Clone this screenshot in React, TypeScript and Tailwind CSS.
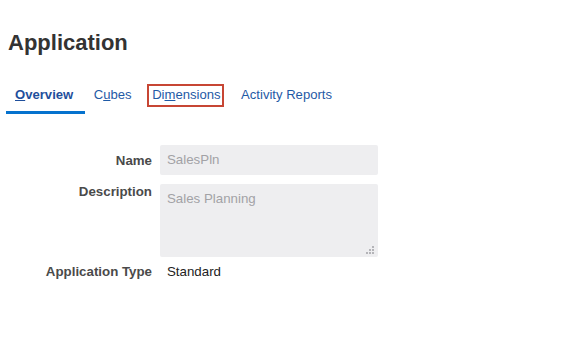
import React from 'react';

function Grip() {
  const dots: [number, number][] = [
    [6, 0],
    [3, 3],
    [6, 3],
    [0, 6],
    [3, 6],
    [6, 6],
  ];
  return (
    <svg width="9" height="9" viewBox="0 0 9 9" className="absolute right-[3px] bottom-[2px]">
      {dots.map(([x, y]) => (
        <rect key={`${x}-${y}`} x={x} y={y} width="2" height="2" fill="#b4b4b8" />
      ))}
    </svg>
  );
}

export default function App() {
  const tabs = [
    { id: 'overview', pre: '', key: 'O', post: 'verview', active: true },
    { id: 'cubes', pre: 'C', key: 'u', post: 'bes' },
    { id: 'dimensions', pre: 'Di', key: 'm', post: 'ensions', focused: true },
    { id: 'activity', pre: 'Activity Reports', key: '', post: '' },
  ];

  return (
    <div className="w-full h-[338px] bg-white font-['Liberation_Sans',Arial,sans-serif] overflow-hidden">
      <h1 className="pt-[32px] pl-[8px] text-[22px] leading-[22px] font-bold text-[#333333]">Application</h1>

      {/* Tabs */}
      <div className="flex mt-[31px] ml-[6px]">
        {tabs.map((t) => (
          <div
            key={t.id}
            className={`pl-[9px] pr-[11.5px] pt-[1px] pb-[8px] border-b-[3px] text-[13.1px] leading-[17px] ${
              t.active ? 'border-[#0572ce] font-bold text-[#1f4f9c]' : 'border-transparent text-[#1f5aa6]'
            }`}
          >
            <span className="relative">
              {t.pre}
              {t.key && <u>{t.key}</u>}
              {t.post}
              {t.focused && (
                <span className="absolute -left-[5px] -right-[3px] -top-[3px] -bottom-[5px] border-2 border-[#c74634]" />
              )}
            </span>
          </div>
        ))}
      </div>

      {/* Form */}
      <div className="mt-[31px] ml-[8px] flex flex-col text-[13.3px]">
        <div className="flex items-center gap-[8px]">
          <div className="w-[144px] text-right font-bold text-[#4a4a4a] leading-[17px]">Name</div>
          <div className="w-[218px] h-[30px] rounded-[2px] bg-[#eeeef0] pl-[7px] flex items-center text-[#a2a2a6]">
            SalesPln
          </div>
        </div>

        <div className="flex items-start gap-[8px] mt-[9px]">
          <div className="w-[144px] text-right font-bold text-[#4a4a4a] leading-[15px]">Description</div>
          <div className="relative w-[218px] h-[73px] rounded-[2px] bg-[#eeeef0] pl-[7px] pt-[6px] leading-[17px] text-[#a2a2a6]">
            Sales Planning
            <Grip />
          </div>
        </div>

        <div className="flex items-center gap-[8px] mt-[6px] leading-[17px]">
          <div className="w-[144px] text-right font-bold text-[#4a4a4a]">Application Type</div>
          <div className="pl-[7px] text-[#222222]">Standard</div>
        </div>
      </div>
    </div>
  );
}
